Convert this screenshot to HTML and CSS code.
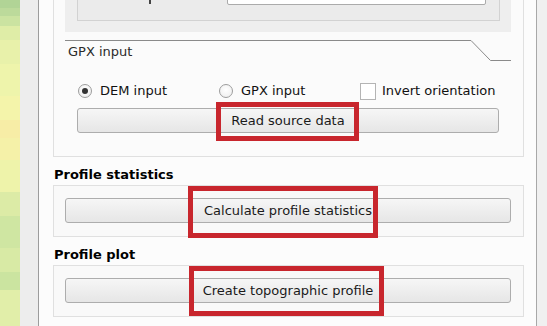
FILE: index.html
```html
<!DOCTYPE html>
<html lang="en">
<head>
    <meta charset="UTF-8">
    <meta name="viewport" content="width=device-width, initial-scale=1.0">
    <title>Topographic profile</title>
    <link rel="stylesheet" href="styles.css">
</head>
<body>

<div class="window">
    <div class="mosaic"></div>
    <div class="gutter"></div>

    <main class="panel">
        <!-- Source data -->
        <section class="group source">
            <div class="tabpane">
                <div class="inner">
                    <span class="field-tail"></span>
                    <span class="field-input"></span>
                </div>
            </div>

            <div class="tabbar">
                <span class="tab">GPX input</span>
                <svg class="tab-edge" width="40" height="21" viewBox="0 0 40 21">
                    <polyline points="0,0.5 19.5,20.5 40,20.5" fill="none" stroke="#8a8a8a" stroke-width="1"/>
                </svg>
            </div>

            <div class="tabpage">
                <div class="options">
                    <label class="opt"><span class="radio checked"></span>DEM input</label>
                    <label class="opt"><span class="radio"></span>GPX input</label>
                    <label class="opt"><span class="check"></span>Invert orientation</label>
                </div>
                <button class="btn">Read source data<span class="mark mark-read"></span></button>
            </div>
        </section>

        <!-- Statistics -->
        <h2>Profile statistics</h2>
        <section class="group">
            <button class="btn">Calculate profile statistics<span class="mark mark-calc"></span></button>
        </section>

        <!-- Plot -->
        <h2>Profile plot</h2>
        <section class="group">
            <button class="btn">Create topographic profile<span class="mark mark-plot"></span></button>
        </section>
    </main>

    <div class="scroll"></div>
</div>

</body>
</html>
```

FILE: styles.css
```css
body {
    margin: 0;
    height: 326px;
    overflow: hidden;
    font-family: "DejaVu Sans", sans-serif;
    font-size: 13px;
    color: #111;
    background-color: #efefef;
}

.window {
    display: flex;
    height: 326px;
}

/* blurred map strip on the far left */
.mosaic {
    width: 20px;
    background: linear-gradient(to bottom,
        #b1d496 0 8px, #bcda9b 8px 16px, #cbe3a1 16px 26px,
        #dfeda7 26px 40px, #e8f1aa 40px 64px, #eef4ab 64px 96px,
        #f4f4aa 96px 120px, #f7eda6 120px 138px, #f5f1a8 138px 160px,
        #eef3aa 160px 192px, #dcebA6 192px 216px, #cfe6a2 216px 248px,
        #d8eaa5 248px 272px, #cbe4a0 272px 290px, #e1eea9 290px 326px);
}

.gutter {
    width: 18px;
    background-color: #ededed;
}

.panel {
    flex: 1;
    border-left: 1px solid #9c9c9c;
    border-right: 1px solid #a8a8a8;
    background-color: #fcfcfc;
    padding: 0 12px 0 14px;
}

.scroll {
    width: 10px;
    background-color: #f0f0f0;
}

.group {
    border: 1px solid #e0e0e0;
    background-color: #f9f9f9;
    padding: 12px 12px 13px 11px;
}

.group.source {
    border-top: none;
    background-color: #fbfbfb;
    padding: 0 0 23px 0;
}

/* clipped field box at the top */
.tabpane {
    margin: 0 12px 8px 11px;
    height: 32px;
    padding: 0 11px 0 12px;
    box-sizing: border-box;
    background-color: #eeeeee;
}

.inner {
    height: 21px;
    box-sizing: border-box;
    border: 1px solid #d2d2d2;
    border-top: none;
    background-color: #ebebeb;
    display: flex;
    align-items: flex-end;
    padding: 0 13px 15px 50px;
}

/* tail of the label scrolled out of view */
.field-tail {
    width: 2px;
    height: 4px;
    margin: 0 76px 1px 21px;
    background-color: #444;
}

.field-input {
    flex: 1;
    height: 22px;
    box-sizing: border-box;
    border: 1px solid #ababab;
    border-radius: 2px;
    background-color: #fff;
}

.tabbar {
    display: flex;
    margin: 0 12px 0 11px;
    height: 21px;
}

.tab {
    flex: 1;
    border-top: 1px solid #8a8a8a;
    padding: 3px 0 0 3px;
    line-height: 16px;
    color: #2a2a2a;
}

.tab-edge {
    display: block;
}

.tabpage {
    margin: 0 12px 0 11px;
    padding: 21px 12px 0 12px;
}

.options {
    display: grid;
    grid-template-columns: 141px 141px auto;
    height: 18px;
    line-height: 18px;
}

.opt {
    display: flex;
    align-items: center;
}

.radio {
    width: 14px;
    height: 14px;
    box-sizing: border-box;
    margin: 0 8px 0 1px;
    border: 1px solid #9d9d9d;
    border-radius: 50%;
    background: radial-gradient(circle at 50% 40%, #ffffff 0, #ececec 100%);
    display: flex;
    align-items: center;
    justify-content: center;
}

.radio.checked::after {
    content: "";
    width: 6px;
    height: 6px;
    border-radius: 50%;
    background-color: #333;
}

.check {
    width: 16px;
    height: 17px;
    box-sizing: border-box;
    margin: 0 6px 0 1px;
    border: 1px solid #b4b4b4;
    background-color: #fff;
}

.btn {
    position: relative;
    display: block;
    width: 100%;
    height: 25px;
    margin-top: 8px;
    padding: 0;
    border: 1px solid #adadad;
    border-radius: 3px;
    background: linear-gradient(to bottom, #f6f6f6, #e6e6e6);
    font-family: "DejaVu Sans", sans-serif;
    font-size: 13px;
    color: #1a1a1a;
}

.group .btn {
    margin-top: 0;
}

.group.source .btn {
    margin-top: 8px;
}

h2 {
    margin: 10px 0 2px 1px;
    font-size: 13px;
    line-height: 16px;
    font-weight: bold;
    color: #000;
}

/* red annotation frames */
.mark {
    position: absolute;
    box-sizing: border-box;
    border: 5px solid #c8262d;
}

.mark-read {
    left: 138px;
    top: -7px;
    width: 143px;
    height: 39px;
}

.mark-calc {
    left: 122px;
    top: -13px;
    width: 190px;
    height: 52px;
}

.mark-plot {
    left: 123px;
    top: -13px;
    width: 195px;
    height: 50px;
}
```
